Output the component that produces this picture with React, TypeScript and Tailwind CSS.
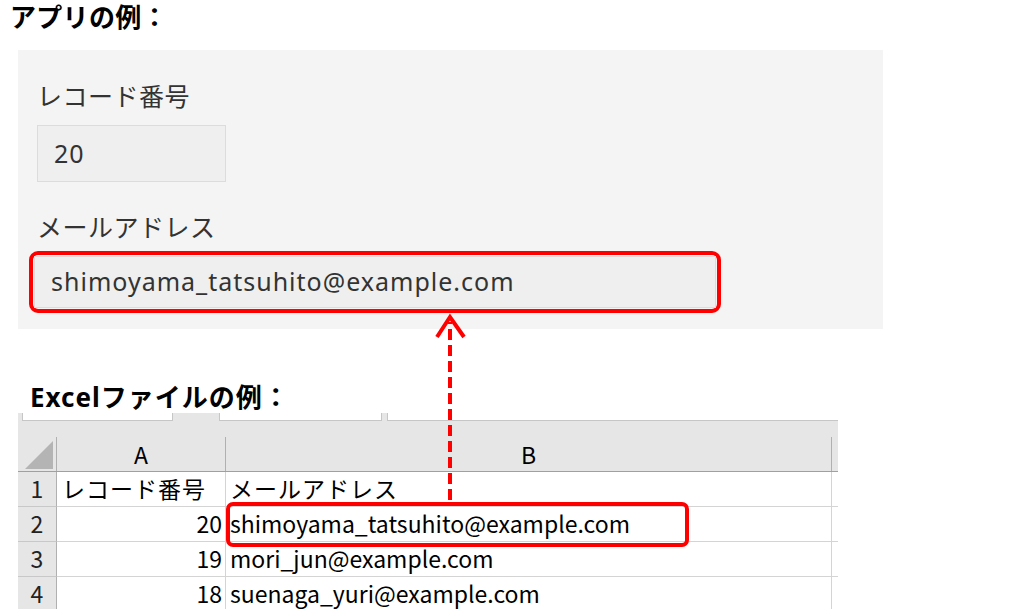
import React from 'react'

const jp = "font-['Noto_Sans','Noto_Sans_CJK_JP',sans-serif]"
const xl = "font-['Noto_Sans_CJK_JP',sans-serif]"

const rows = [
  { n: 1, a: 'レコード番号', b: 'メールアドレス', num: false },
  { n: 2, a: '20', b: 'shimoyama_tatsuhito@example.com', num: true },
  { n: 3, a: '19', b: 'mori_jun@example.com', num: true },
  { n: 4, a: '18', b: 'suenaga_yuri@example.com', num: true },
]

const Arrow = () => (
  <svg className="absolute left-0 top-0 pointer-events-none" width="1010" height="609">
    <line x1="450" y1="500" x2="450" y2="322" stroke="#ff0000" strokeWidth="4" strokeDasharray="11 5" />
    <polyline points="437,337 450,317 464,337" fill="none" stroke="#ff0000" strokeWidth="4" />
  </svg>
)

const App = () => {
  return (
    <div className={`relative w-[1010px] h-[609px] bg-white overflow-hidden ${jp}`}>
      <h1 className="pl-[10px] h-[50px] leading-[34px] text-[26px] tracking-[0.3px] font-bold text-black">アプリの例：</h1>

      <div className="ml-[18px] w-[865px] h-[279px] bg-[#f4f4f4] pl-[19px] pt-[29px]">
        <div className="h-[35px] leading-[35px] text-[25px] tracking-[0.5px] text-[#333]">レコード番号</div>
        <div className="mt-[11px] w-[189px] h-[57px] bg-[#efefef] border border-[#dcdcdc] pl-[16px] flex items-center text-[25px] tracking-[1px] text-[#333]">
          20
        </div>
        <div className="mt-[28px] h-[35px] leading-[35px] text-[25px] tracking-[0.5px] text-[#333]">メールアドレス</div>
        <div className="mt-[6px] ml-[-8px] w-[692px] h-[62px] border-4 border-[#ff0000] rounded-[9px] p-[1px]">
          <div className="h-full bg-[#efefef] border border-[#dcdcdc] pl-[16px] flex items-center text-[25px] tracking-[1px] text-[#333]">
            shimoyama_tatsuhito@example.com
          </div>
        </div>
      </div>

      <h2 className="h-[84px] pt-[51px] pl-[30px] leading-[34px] text-[26px] tracking-[1px] font-bold text-black">Excelファイルの例：</h2>

      <div className={`ml-[18px] w-[820px] ${xl} text-black`}>
        <div className="bg-[#e6e6e6]">
          <div className="h-[24px] flex items-start">
            <div className="ml-[4px] w-[151px] h-[8px] bg-white border-l border-b border-r border-[#c6c6c6]" />
            <div className="ml-[46px] w-[163px] h-[8px] bg-white border-l border-b border-r border-[#c6c6c6]" />
            <div className="ml-[5px] flex-1 h-[8px] bg-white border-l border-b border-[#c6c6c6]" />
          </div>
          <div className="flex h-[35px] border-b border-[#a0a0a0]">
            <div className="w-[39px] border-r border-[#b0b0b0] flex items-end justify-end pr-[3px] pb-[2px]">
              <svg width="28" height="28" viewBox="0 0 28 28">
                <polygon points="28,0 28,28 0,28" fill="#b4b4b4" />
              </svg>
            </div>
            <div className="w-[169px] border-r border-[#b0b0b0] flex items-center justify-center text-[23px] leading-none">A</div>
            <div className="w-[606px] border-r border-[#b0b0b0] flex items-center justify-center text-[23px] leading-none">B</div>
            <div className="flex-1" />
          </div>
        </div>
        {rows.map((r) => (
          <div key={r.n} className="flex h-[35px]">
            <div className="w-[39px] bg-[#e6e6e6] border-r border-b border-r-[#b0b0b0] border-b-[#c8c8c8] flex items-center justify-center pb-[2px] text-[23px] text-[#222]">
              {r.n}
            </div>
            <div className={`w-[169px] border-r border-b border-[#d4d4d4] flex items-center pb-[2px] text-[23px] whitespace-nowrap ${r.num ? 'justify-end pr-[3px]' : 'pl-[5px] tracking-[1px]'}`}>
              {r.a}
            </div>
            <div className={`relative w-[606px] border-r border-b border-[#d4d4d4] flex items-center pl-[4px] pb-[2px] text-[23px] whitespace-nowrap ${r.num ? '' : 'tracking-[1px]'}`}>
              {r.b}
              {r.n === 2 && (
                <div className="absolute left-0 top-[-5px] w-[463px] h-[45px] border-4 border-[#ff0000] rounded-[7px]" />
              )}
            </div>
            <div className="flex-1 border-b border-[#d4d4d4]" />
          </div>
        ))}
      </div>

      <Arrow />
    </div>
  )
}

export default App
